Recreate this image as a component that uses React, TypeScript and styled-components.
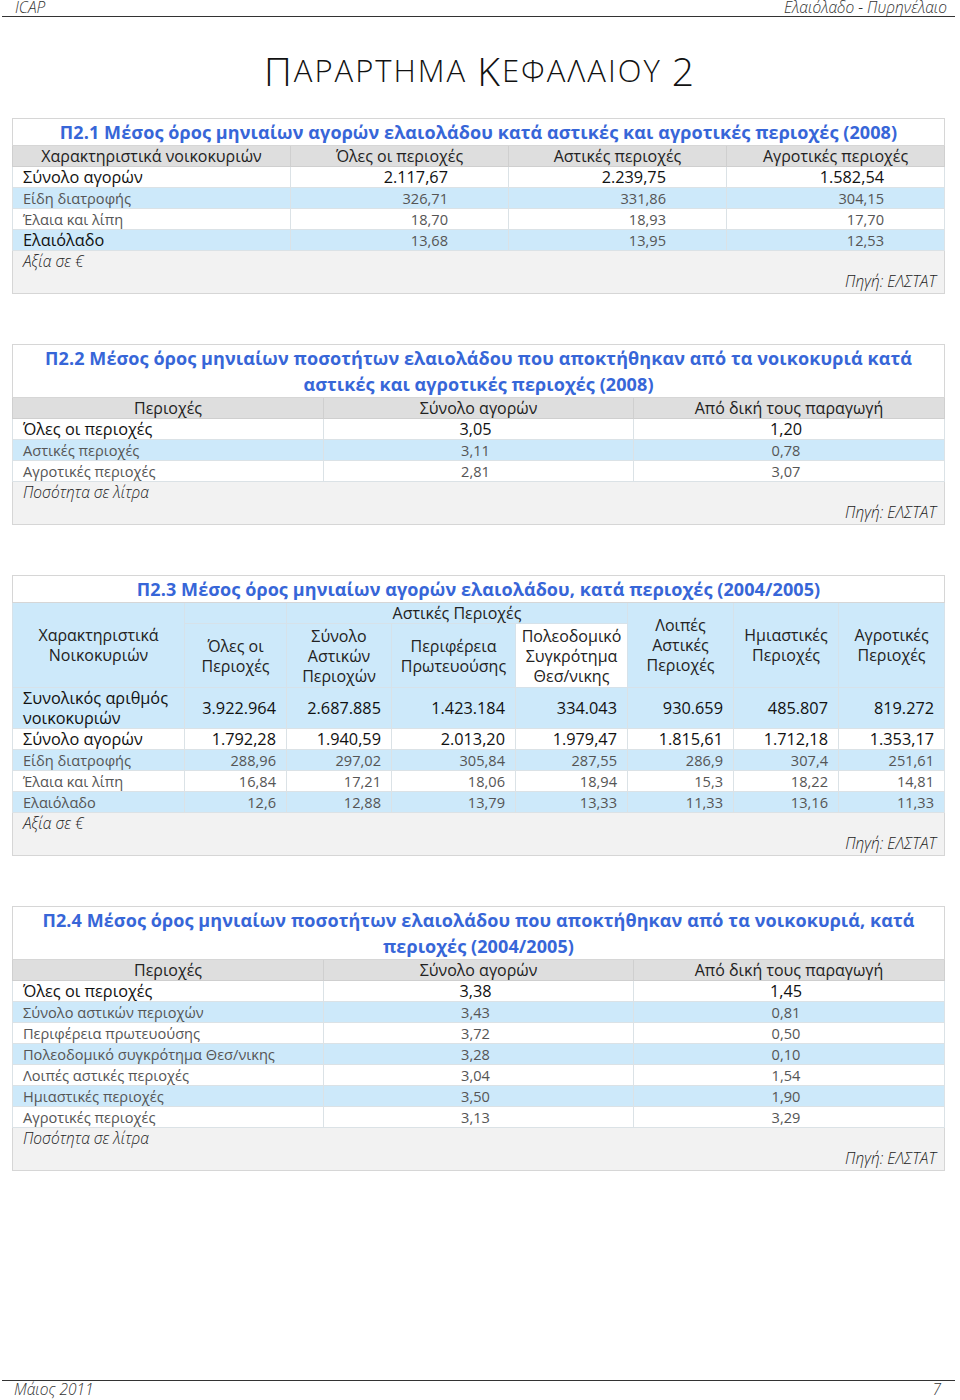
import React from 'react';
import styled, { createGlobalStyle } from 'styled-components';

const Global = createGlobalStyle`
  html, body { margin: 0; padding: 0; background: #fff; }
  body { font-family: "Open Sans", "Noto Sans", sans-serif; color: #222; }
`;

const Page = styled.div`
  width: 960px;
  height: 1400px;
  display: flex;
  flex-direction: column;
  overflow: hidden;
`;

const RunningHeader = styled.header`
  margin: 0 5px 0 2px;
  height: 17px;
  border-bottom: 1.5px solid #333;
  display: flex;
  justify-content: space-between;
  align-items: flex-end;
  padding: 0 8px 0 13px;
  box-sizing: border-box;
`;

const RunningText = styled.span`
  font-family: "Open Sans", sans-serif;
  font-style: italic;
  font-weight: 300;
  font-size: 15.5px;
  line-height: 13px;
  color: #333;
  margin-bottom: 2px;
`;

const FooterText = styled(RunningText)`
  line-height: 16px;
  margin-bottom: 0;
`;

const TitleBlock = styled.h1`
  margin: 0;
  height: 101px;
  display: flex;
  align-items: center;
  justify-content: center;
  padding-top: 6px;
  box-sizing: border-box;
  font-family: "Open Sans", sans-serif;
  font-weight: 300;
  color: #111;
  letter-spacing: 2px;
`;

const TitleChar = styled.span<{ $big?: boolean }>`
  font-size: ${(p) => (p.$big ? '39px' : '31px')};
  line-height: 1;
`;

const Sections = styled.main`
  display: flex;
  flex-direction: column;
  gap: 50px;
  padding: 0 0 0 12px;
`;

const DataTable = styled.table`
  width: 932px;
  border-collapse: collapse;
  table-layout: fixed;
  border: 1px solid #d6d6d6;
  font-family: "Open Sans", sans-serif;
`;

const Caption = styled.th`
  background: #fff;
  color: #3766d8;
  font-weight: 700;
  font-size: 18px;
  letter-spacing: 0.1px;
  line-height: 26px;
  text-align: center;
  padding: 0 4px;
  border: 1px solid #d6d6d6;
`;

const HeadCell = styled.th<{ $tone?: 'gray' | 'blue' | 'white' }>`
  background: ${(p) => (p.$tone === 'blue' ? '#cde9fa' : p.$tone === 'white' ? '#ffffff' : '#dedede')};
  font-weight: 400;
  font-size: 16px;
  line-height: 20px;
  color: #222;
  text-align: center;
  vertical-align: middle;
  padding: 0 2px;
  border: 1px solid ${(p) => (p.$tone === 'gray' || !p.$tone ? '#cfcfcf' : '#d6e2ea')};
`;

const Row = styled.tr<{ $blue?: boolean }>`
  background: ${(p) => (p.$blue ? '#cde9fa' : '#ffffff')};
`;

const Cell = styled.td<{ $align?: 'left' | 'right' | 'center'; $strong?: boolean; $pad?: number }>`
  font-size: ${(p) => (p.$strong ? '16.3px' : '14.6px')};
  color: ${(p) => (p.$strong ? '#111' : '#555')};
  font-weight: 400;
  line-height: 20px;
  height: 20px;
  padding: 0 ${(p) => (p.$align === 'right' ? `${p.$pad ?? 10}px` : '10px')} 0 ${(p) => (p.$align === 'left' ? '10px' : '4px')};
  text-align: ${(p) => p.$align ?? 'left'};
  white-space: nowrap;
  border: 1px solid #dbe2e6;
`;

const WrapCell = styled(Cell)`
  white-space: normal;
  height: 40px;
  vertical-align: middle;
`;

const FootCell = styled.td`
  background: #f2f2f2;
  border: 1px solid #d6d6d6;
  height: 42px;
  padding: 0 8px 0 10px;
  vertical-align: top;
`;

const NoteText = styled.div`
  font-style: italic;
  font-weight: 300;
  font-size: 15.5px;
  line-height: 20px;
  color: #222;
`;

const SourceText = styled(NoteText)`
  text-align: right;
`;

const RunningFooter = styled.footer`
  margin: auto 5px 0 2px;
  border-top: 1.5px solid #333;
  height: 19px;
  display: flex;
  justify-content: space-between;
  align-items: flex-start;
  padding: 0 14px 0 12px;
`;

type RowData = { label: string; values: string[]; blue?: boolean; strongLabel?: boolean; strongValues?: boolean };

const Foot = ({ span, note }: { span: number; note: string }) => (
  <tr>
    <FootCell colSpan={span}>
      <NoteText>{note}</NoteText>
      <SourceText>Πηγή: ΕΛΣΤΑΤ</SourceText>
    </FootCell>
  </tr>
);

const t1: RowData[] = [
  { label: 'Σύνολο αγορών', values: ['2.117,67', '2.239,75', '1.582,54'], strongLabel: true, strongValues: true },
  { label: 'Είδη διατροφής', values: ['326,71', '331,86', '304,15'], blue: true },
  { label: 'Έλαια και λίπη', values: ['18,70', '18,93', '17,70'] },
  { label: 'Ελαιόλαδο', values: ['13,68', '13,95', '12,53'], blue: true, strongLabel: true },
];

const t2: RowData[] = [
  { label: 'Όλες οι περιοχές', values: ['3,05', '1,20'], strongLabel: true, strongValues: true },
  { label: 'Αστικές περιοχές', values: ['3,11', '0,78'], blue: true },
  { label: 'Αγροτικές περιοχές', values: ['2,81', '3,07'] },
];

const t3: RowData[] = [
  { label: 'Σύνολο αγορών', values: ['1.792,28', '1.940,59', '2.013,20', '1.979,47', '1.815,61', '1.712,18', '1.353,17'], strongLabel: true, strongValues: true },
  { label: 'Είδη διατροφής', values: ['288,96', '297,02', '305,84', '287,55', '286,9', '307,4', '251,61'], blue: true },
  { label: 'Έλαια και λίπη', values: ['16,84', '17,21', '18,06', '18,94', '15,3', '18,22', '14,81'] },
  { label: 'Ελαιόλαδο', values: ['12,6', '12,88', '13,79', '13,33', '11,33', '13,16', '11,33'], blue: true },
];

const t4: RowData[] = [
  { label: 'Όλες οι περιοχές', values: ['3,38', '1,45'], strongLabel: true, strongValues: true },
  { label: 'Σύνολο αστικών περιοχών', values: ['3,43', '0,81'], blue: true },
  { label: 'Περιφέρεια πρωτευούσης', values: ['3,72', '0,50'] },
  { label: 'Πολεοδομικό συγκρότημα Θεσ/νικης', values: ['3,28', '0,10'], blue: true },
  { label: 'Λοιπές αστικές περιοχές', values: ['3,04', '1,54'] },
  { label: 'Ημιαστικές περιοχές', values: ['3,50', '1,90'], blue: true },
  { label: 'Αγροτικές περιοχές', values: ['3,13', '3,29'] },
];

const Cols = ({ widths }: { widths: number[] }) => (
  <colgroup>
    {widths.map((w, i) => (
      <col key={i} style={{ width: w }} />
    ))}
  </colgroup>
);

const Body = ({ rows, align, pad }: { rows: RowData[]; align: 'right' | 'center'; pad?: number }) => (
  <>
    {rows.map((r) => (
      <Row key={r.label} $blue={r.blue}>
        <Cell $align="left" $strong={r.strongLabel}>{r.label}</Cell>
        {r.values.map((v, i) => (
          <Cell key={i} $align={align} $pad={pad} $strong={r.strongValues}>{v}</Cell>
        ))}
      </Row>
    ))}
  </>
);

const QuantityTable = ({ title, rows }: { title: React.ReactNode; rows: RowData[] }) => (
  <DataTable>
    <Cols widths={[311, 310, 311]} />
    <tbody>
      <tr><Caption colSpan={3}>{title}</Caption></tr>
      <tr>
        <HeadCell>Περιοχές</HeadCell>
        <HeadCell>Σύνολο αγορών</HeadCell>
        <HeadCell>Από δική τους παραγωγή</HeadCell>
      </tr>
      <Body rows={rows} align="center" />
      <Foot span={3} note="Ποσότητα σε λίτρα" />
    </tbody>
  </DataTable>
);

export default function App() {
  return (
    <Page>
      <Global />
      <RunningHeader>
        <RunningText>ICAP</RunningText>
        <RunningText>Ελαιόλαδο - Πυρηνέλαιο</RunningText>
      </RunningHeader>
      <TitleBlock>
        <TitleChar $big>Π</TitleChar>
        <TitleChar>ΑΡΑΡΤΗΜΑ&nbsp;</TitleChar>
        <TitleChar $big>Κ</TitleChar>
        <TitleChar>ΕΦΑΛΑΙΟΥ&nbsp;</TitleChar>
        <TitleChar $big>2</TitleChar>
      </TitleBlock>
      <Sections>
        <DataTable>
          <Cols widths={[278, 218, 218, 218]} />
          <tbody>
            <tr><Caption colSpan={4}>Π2.1 Μέσος όρος μηνιαίων αγορών ελαιολάδου κατά αστικές και αγροτικές περιοχές (2008)</Caption></tr>
            <tr>
              <HeadCell>Χαρακτηριστικά νοικοκυριών</HeadCell>
              <HeadCell>Όλες οι περιοχές</HeadCell>
              <HeadCell>Αστικές περιοχές</HeadCell>
              <HeadCell>Αγροτικές περιοχές</HeadCell>
            </tr>
            <Body rows={t1} align="right" pad={60} />
            <Foot span={4} note="Αξία σε €" />
          </tbody>
        </DataTable>

        <QuantityTable
          title={<>Π2.2 Μέσος όρος μηνιαίων ποσοτήτων ελαιολάδου που αποκτήθηκαν από τα νοικοκυριά κατά<br />αστικές και αγροτικές περιοχές (2008)</>}
          rows={t2}
        />

        <DataTable>
          <Cols widths={[172, 102, 105, 124, 112, 106, 105, 106]} />
          <tbody>
            <tr><Caption colSpan={8}>Π2.3 Μέσος όρος μηνιαίων αγορών ελαιολάδου, κατά περιοχές (2004/2005)</Caption></tr>
            <tr>
              <HeadCell $tone="blue" rowSpan={2}>Χαρακτηριστικά<br />Νοικοκυριών</HeadCell>
              <HeadCell $tone="blue"></HeadCell>
              <HeadCell $tone="blue" colSpan={3}>Αστικές Περιοχές</HeadCell>
              <HeadCell $tone="blue" rowSpan={2}>Λοιπές<br />Αστικές<br />Περιοχές</HeadCell>
              <HeadCell $tone="blue" rowSpan={2}>Ημιαστικές<br />Περιοχές</HeadCell>
              <HeadCell $tone="blue" rowSpan={2}>Αγροτικές<br />Περιοχές</HeadCell>
            </tr>
            <tr style={{ height: 64 }}>
              <HeadCell $tone="blue">Όλες οι<br />Περιοχές</HeadCell>
              <HeadCell $tone="blue">Σύνολο<br />Αστικών<br />Περιοχών</HeadCell>
              <HeadCell $tone="blue">Περιφέρεια<br />Πρωτευούσης</HeadCell>
              <HeadCell $tone="white">Πολεοδομικό<br />Συγκρότημα<br />Θεσ/νικης</HeadCell>
            </tr>
            <Row $blue>
              <WrapCell $align="left" $strong>Συνολικός αριθμός νοικοκυριών</WrapCell>
              {['3.922.964', '2.687.885', '1.423.184', '334.043', '930.659', '485.807', '819.272'].map((v) => (
                <WrapCell key={v} $align="right" $strong>{v}</WrapCell>
              ))}
            </Row>
            <Body rows={t3} align="right" pad={10} />
            <Foot span={8} note="Αξία σε €" />
          </tbody>
        </DataTable>

        <QuantityTable
          title={<>Π2.4 Μέσος όρος μηνιαίων ποσοτήτων ελαιολάδου που αποκτήθηκαν από τα νοικοκυριά, κατά<br />περιοχές (2004/2005)</>}
          rows={t4}
        />
      </Sections>
      <RunningFooter>
        <FooterText>Μάιος 2011</FooterText>
        <FooterText>7</FooterText>
      </RunningFooter>
    </Page>
  );
}
